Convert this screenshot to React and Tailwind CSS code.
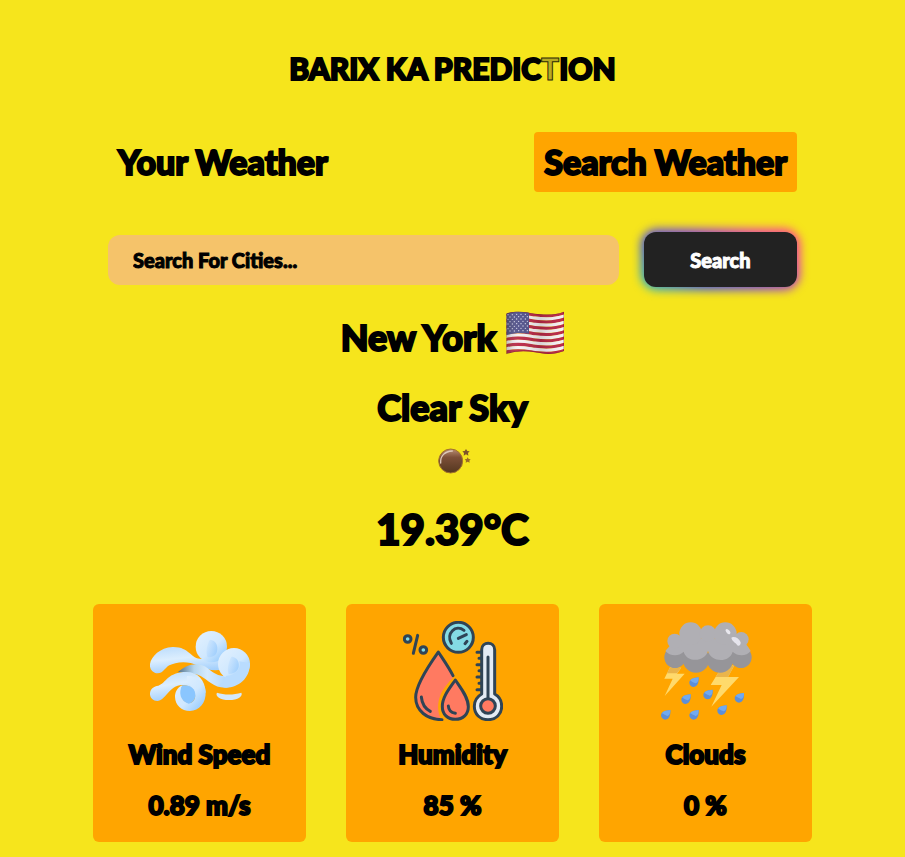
import React from "react";

const STRIPES = Array.from({ length: 13 }, (_, i) => i);
const STARS = Array.from({ length: 40 }, (_, i) => i);

function Flag() {
  return (
    <svg viewBox="525 35 174 132" className="h-11 w-[58px]" role="img" aria-label="US">
      <defs>
        <linearGradient id="fold" x1="0" x2="1" y1="0" y2="0">
          <stop offset="0" stopColor="#333" stopOpacity=".3" />
          <stop offset=".22" stopColor="#fff" stopOpacity=".08" />
          <stop offset=".6" stopColor="#333" stopOpacity=".16" />
          <stop offset="1" stopColor="#fff" stopOpacity=".05" />
        </linearGradient>
        <clipPath id="flagShape">
          <path d="M526 43C560 31 590 40 612 43S670 49 699 37V155C666 168 638 164 612 159S556 153 526 165Z" />
        </clipPath>
      </defs>
      <g clipPath="url(#flagShape)">
        {STRIPES.map((i) => (
          <path
            key={i}
            d="M520 45C560 33 590 42 612 45S670 51 705 37"
            transform={`translate(0 ${i * 9.4 + 2})`}
            fill="none"
            stroke={i % 2 ? "#f6f1f3" : "#b8203f"}
            strokeWidth="9.8"
          />
        ))}
        <path d="M525 35V108C550 99 575 100 594 103V35Z" fill="#4b4b86" />
        {STARS.map((i) => (
          <circle
            key={i}
            cx={531 + (i % 5) * 13 + (Math.floor(i / 5) % 2) * 6}
            cy={46 + Math.floor(i / 5) * 7 - (i % 5 > 1 ? 1 : 0)}
            r="1.9"
            fill="#dcdcf0"
          />
        ))}
        <path d="M525 35H699V167H525Z" fill="url(#fold)" />
        <path d="M526 43C560 31 590 40 612 43S670 49 699 37V155C666 168 638 164 612 159S556 153 526 165Z" fill="none" stroke="#5b1024" strokeOpacity=".5" strokeWidth="3" />
      </g>
    </svg>
  );
}

function ClearNight() {
  return (
    <svg viewBox="234 20 108 84" className="h-7 w-9" aria-hidden="true">
      <defs>
        <linearGradient id="moon" x1="0" x2="0" y1="0" y2="1">
          <stop offset="0" stopColor="#b98d72" />
          <stop offset=".35" stopColor="#7c4f38" />
          <stop offset="1" stopColor="#54371f" />
        </linearGradient>
      </defs>
      <circle cx="275" cy="62" r="36" fill="url(#moon)" stroke="#a4742b" strokeWidth="3" />
      <path d="M245 68C243 46 258 33 280 32" fill="none" stroke="#dcc8ba" strokeWidth="4" strokeLinecap="round" />
      <path d="M321 26l4 6 7 1-5 5 1 8-7-4-7 4 1-8-5-5 7-1Z" fill="#80552a" />
      <path d="M326 51l3 5 6 1-4 4 1 6-6-3-6 3 1-6-4-4 6-1Z" fill="#9b6c25" />
    </svg>
  );
}

function WindIcon() {
  return (
    <svg viewBox="180 63 300 300" className="size-[100px]" aria-hidden="true">
      <defs>
        <linearGradient id="w1" x1="0" x2=".3" y1="0" y2="1">
          <stop offset="0" stopColor="#b9dbfc" />
          <stop offset=".5" stopColor="#dceefe" />
          <stop offset="1" stopColor="#a4d0fc" />
        </linearGradient>
        <linearGradient id="w2" x1="0" x2="1" y1="0" y2="1">
          <stop offset="0" stopColor="#e3f1fe" />
          <stop offset=".55" stopColor="#d0e8fe" />
          <stop offset="1" stopColor="#86c3fd" />
        </linearGradient>
        <linearGradient id="w3" x1="0" x2="1" y1="0" y2="0">
          <stop offset="0" stopColor="#516f86" />
          <stop offset=".25" stopColor="#b5d6ef" />
          <stop offset=".45" stopColor="#d5eafd" />
          <stop offset="1" stopColor="#97cbfd" />
        </linearGradient>
        <linearGradient id="swirl" x1="0" x2="1" y1="0" y2=".6">
          <stop offset="0" stopColor="#d6eafe" />
          <stop offset="1" stopColor="#a2d0fd" />
        </linearGradient>
      </defs>
      <path d="M180 192C184 169 210 143 248 141C300 140 300 177 336 177C360 176 372 171 378 158L412 150L398 208C370 215 350 208 326 198C288 179 256 188 238 196C224 204 219 220 203 220C188 219 178 207 180 192Z" fill="url(#w1)" />
      <circle cx="364" cy="140" r="47" fill="url(#w2)" />
      <path d="M353 172C376 172 382 160 382 144C381 127 371 120 360 119C352 130 345 155 353 172Z" fill="url(#swirl)" />
      <path d="M263 217C286 194 325 182 352 204C374 221 382 228 408 228L460 214C453 244 430 262 407 263C371 264 355 240 332 228C308 218 286 218 263 217Z" fill="url(#w3)" />
      <circle cx="432" cy="192" r="48" fill="url(#w2)" />
      <path d="M480 190C480 237 444 263 409 263L384 258C399 247 406 232 408 228C438 227 455 206 448 184Z" fill="#b9dcfe" />
      <path d="M416 222C439 221 449 207 446 189C444 177 434 170 424 170C416 186 410 206 416 222Z" fill="url(#swirl)" />
      <path d="M180 280C181 265 192 259 205 257C229 249 232 216 290 216C322 216 346 239 347 278L315 287C313 266 298 255 277 255C239 254 226 303 202 303C188 303 179 292 180 280Z" fill="url(#w1)" />
      <path d="M277 256C260 264 255 278 255 291C256 316 274 333 300 333C327 332 349 311 347 274C345 246 318 226 291 228C286 248 303 255 312 271C320 289 314 305 301 309C280 311 265 286 277 256Z" fill="url(#w2)" />
      <path d="M277 256C299 253 316 264 316 286C315 300 309 308 296 311C272 305 264 278 277 256Z" fill="#8ac6fe" />
      <path d="M381 278C402 285 431 285 454 278C460 288 444 300 417 300C391 300 374 288 381 278Z" fill="#d4e9fb" />
    </svg>
  );
}

function HumidityIcon() {
  return (
    <svg viewBox="186 63 300 300" className="size-[100px]" fill="none" stroke="#2f4456" strokeWidth="9" strokeLinecap="round" strokeLinejoin="round" aria-hidden="true">
      <circle cx="200" cy="117" r="10" fill="#84dbe4" />
      <circle cx="247" cy="150" r="10" fill="#84dbe4" />
      <path d="M230 106L217 160" />
      <circle cx="352" cy="112" r="45" fill="#84dbe4" />
      <path d="M331 130C314 100 344 72 369 91M352 115L376 104M372 131L378 124" />
      <path d="M335 227C324 203 307 179 292 156C270 187 224 251 224 292C224 332 258 359 301 358C284 327 287 280 335 235Z" fill="#ff7a61" stroke="none" />
      <path d="M336 227C324 203 307 179 292 156C270 187 224 251 224 292C224 332 258 359 303 359" />
      <path d="M343 240C328 262 303 291 304 320C304 343 320 358 343 358C366 358 382 343 382 320C382 291 358 262 343 240Z" fill="#ff7a61" />
      <path d="M241 291C243 311 252 326 268 334M322 318C323 332 330 338 343 340" />
      <path d="M422 282V149C422 123 461 123 461 149V282C476 290 482 302 482 319C482 343 465 359 441 359C417 359 400 343 400 319C400 302 408 290 422 282Z" fill="#e3ebf4" />
      <path d="M441 171V293" />
      <circle cx="441" cy="318" r="22" fill="#ff7a61" />
      <path d="M419 157H408M419 175H414M419 194H408M419 212H414M419 231H408M419 250H414M419 269H408" />
    </svg>
  );
}

const DROPS = [[308, 246], [284, 297], [350, 283], [444, 293], [223, 344], [308, 344], [392, 330]];

function CloudIcon() {
  return (
    <svg viewBox="194 63 300 300" className="size-[100px]" aria-hidden="true">
      <path d="M236 202L219 236H244L220 288L280 221H257L270 203Z" fill="#ffda6b" />
      <path d="M236 202L227 220H257L270 203Z" fill="#e9b44c" />
      <path d="M384 213L358 255H391L360 320L443 231H410L431 193Z" fill="#ffda6b" />
      <path d="M384 213L373 231H410L431 193Z" fill="#eab54b" />
      <g fill="#969599">
        <circle cx="251" cy="172" r="32" />
        <circle cx="314" cy="178" r="40" />
        <circle cx="386" cy="178" r="40" />
        <circle cx="449" cy="172" r="32" />
      </g>
      <g fill="#b0afb4">
        <path d="M222 153C235 140 240 130 260 115H450C460 130 470 138 478 153C467 168 440 171 424 155C414 190 359 187 350 153C341 187 286 189 277 155C261 171 235 168 222 153Z" />
        <circle cx="250" cy="123" r="22" />
        <circle cx="298" cy="101" r="34" />
        <circle cx="350" cy="101" r="25" />
        <circle cx="402" cy="101" r="34" />
        <circle cx="450" cy="118" r="22" />
      </g>
      <ellipse cx="410" cy="95" rx="5" ry="9" transform="rotate(-40 410 95)" fill="#e9e8ee" />
      <path d="M420 114C424 107 442 111 448 127C449 136 442 140 438 136C434 128 423 126 420 114Z" fill="#e5e4ec" />
      {DROPS.map(([x, y]) => (
        <g key={`${x}-${y}`} transform={`translate(${x} ${y})`}>
          <path d="M14 -14C1 -13 -14 -9 -14 2C-14 9 -8 15 -1 15C11 14 15 1 14 -14Z" fill="#5d8fd8" />
          <path d="M14 -14C1 -13 -9 -10 -11 -4C-5 -1 -1 2 5 4C12 2 14 -5 14 -14Z" fill="#72aaf0" />
        </g>
      ))}
    </svg>
  );
}

const CARDS = [
  { label: "Wind Speed", value: "0.89 m/s", Icon: WindIcon },
  { label: "Humidity", value: "85 %", Icon: HumidityIcon },
  { label: "Clouds", value: "0 %", Icon: CloudIcon },
];

export default function App() {
  return (
    <main className="min-h-screen bg-[#f6e51c] px-[93px] pt-12 pb-[15px] font-['Lato','Open_Sans',sans-serif] font-black text-black [-webkit-text-stroke:2px_currentColor]">
      <h1 className="text-center text-[30px] leading-10">
        BARIX KA PREDIC
        <span className="text-[#b9ac20] [-webkit-text-stroke:1px_#2d2a08]">T</span>
        ION
      </h1>

      <div className="px-[15px]">
        <nav className="mt-11 flex justify-between">
          <button type="button" className="rounded px-[10px] py-[10px] text-[34px] leading-10">Your Weather</button>
          <button type="button" className="rounded bg-[#ffa500] px-[10px] py-[10px] text-[34px] leading-10">Search Weather</button>
        </nav>

        <form className="mt-10 flex items-center gap-[25px] [-webkit-text-stroke:1px_currentColor]" onSubmit={(e) => e.preventDefault()}>
          <input
            type="text"
            aria-label="Search For Cities"
            placeholder="Search For Cities..."
            className="h-[50px] min-w-0 flex-1 rounded-xl bg-[#f5c36a] px-[25px] text-xl placeholder:text-black placeholder:opacity-100"
          />
          <div className="relative isolate h-[55px] w-[153px]">
            <div className="absolute -inset-[3px] -z-10 rounded-2xl bg-[linear-gradient(35deg,#20c9bd_0%,#3c50e4_28%,#7a3cdc_52%,#e03cb0_78%,#ff3d92_95%)] blur-[5px]" />
            <button type="submit" className="h-full w-full rounded-xl bg-[#222] text-xl text-white">Search</button>
          </div>
        </form>
      </div>

      <section className="mt-6 flex flex-col items-center">
        <div className="flex items-end gap-[10px]">
          <h2 className="text-[36px] leading-9">New York</h2>
          <Flag />
        </div>
        <p className="mt-8 text-[36px] leading-10">Clear Sky</p>
        <div className="mt-5 pl-1">
          <ClearNight />
        </div>
        <p className="mt-[30px] pb-[2px] text-[42px] leading-12">19.39°C</p>
      </section>

      <section className="mt-[49px] grid grid-cols-3 gap-10">
        {CARDS.map(({ label, value, Icon }) => (
          <article key={label} className="flex flex-col items-center rounded-md bg-[#ffa500] py-[17px]">
            <Icon />
            <h3 className="mt-[15px] text-[26px] leading-9 whitespace-nowrap">{label}</h3>
            <p className="mt-[15px] pb-[2px] text-[26px] leading-9">{value}</p>
          </article>
        ))}
      </section>
    </main>
  );
}
